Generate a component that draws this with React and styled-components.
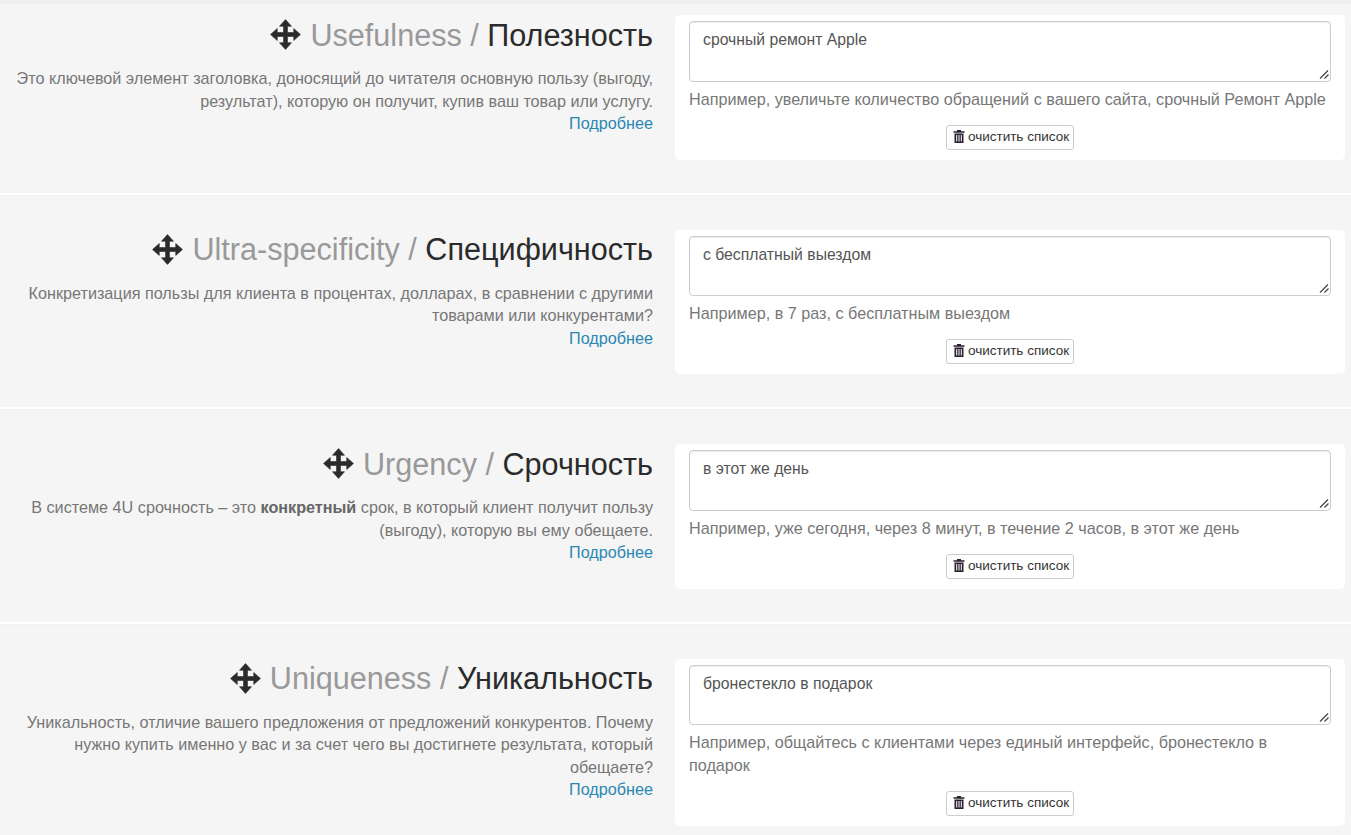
import React from "react";
import styled, { createGlobalStyle } from "styled-components";

const GlobalStyle = createGlobalStyle`
  html, body {
    margin: 0;
    padding: 0;
    height: 835px;
    overflow: hidden;
    background: #f5f5f5;
    font-family: "Liberation Sans", Arial, sans-serif;
  }
`;

const Strip = styled.div`
  height: 4px;
  background: #f0f0f0;
`;

const Row = styled.section`
  display: grid;
  grid-template-columns: 653px 670px;
  column-gap: 22px;
  padding: ${props => (props.$first ? "11px" : "35px")} 6px 33px 0;
  border-bottom: ${props => (props.$last ? "none" : "2px solid #fff")};
  box-shadow: ${props => (props.$last ? "none" : "0 1px 0 #f1f1f1")};
`;

const Info = styled.div`
  text-align: right;
`;

const Heading = styled.h2`
  display: flex;
  justify-content: flex-end;
  align-items: center;
  gap: 8px;
  margin: 0;
  padding-top: 1px;
  height: 37px;
  font-size: 30.6px;
  font-weight: 400;
  line-height: 34px;
  color: #2b2b2b;
  white-space: pre;
`;

const English = styled.span`
  color: #999;
`;

const Description = styled.p`
  margin: 14px 0 0;
  font-size: 16.2px;
  line-height: 22.5px;
  color: #777;

  b {
    color: #666;
  }
`;

const More = styled.a`
  display: block;
  font-size: 16.2px;
  line-height: 22.5px;
  color: #2a87b3;
  text-decoration: none;
`;

const Card = styled.div`
  background: #fff;
  border-radius: 5px;
  padding: 6px 14px 10px;
`;

const FieldWrap = styled.div`
  position: relative;
  height: 60.5px;
`;

const Field = styled.textarea`
  display: block;
  box-sizing: border-box;
  width: 642px;
  height: 60.5px;
  margin: 0;
  padding: 8px 13px;
  border: 1px solid #ccc;
  border-radius: 4px;
  font-family: inherit;
  font-size: 15.75px;
  line-height: 20px;
  color: #555;
  background: #fff;
  outline: none;
  resize: none;
  box-shadow: inset 0 1px 1px rgba(0, 0, 0, 0.075);
`;

const Grip = styled.svg`
  position: absolute;
  right: 2px;
  bottom: 3px;
`;

const Hint = styled.p`
  margin: 6px 0 0;
  font-size: 16.2px;
  line-height: 22.5px;
  color: #777;
`;

const Actions = styled.div`
  display: flex;
  justify-content: center;
  margin-top: 14.5px;
`;

const ClearButton = styled.button`
  display: inline-flex;
  align-items: center;
  gap: 3px;
  box-sizing: border-box;
  height: 25px;
  padding: 0 4px 2px 6px;
  background: #fff;
  border: 1px solid #ccc;
  border-radius: 3px;
  font-family: inherit;
  font-size: 13.5px;
  color: #333;
`;

const MoveIcon = () => (
  <svg width="33" height="33" viewBox="0 0 32 32" fill="#2b2b2b" stroke="#2b2b2b" strokeWidth="0.6" strokeLinejoin="round" aria-hidden="true">
    <path d="M16 1.500l5.800 6.500h-3.900v6.100H24v-3.900l6.500 5.800-6.500 5.800v-3.900h-6.100V24h3.900L16 30.500 10.200 24h3.900v-6.100H8v3.900L1.500 16 8 10.200v3.900h6.100V8h-3.900z" />
  </svg>
);

const TrashIcon = () => (
  <svg width="12" height="13" viewBox="0 0 12 13" fill="#2a2030" aria-hidden="true">
    <path d="M4 0h4v1.200h3.500v1.600H.5V1.200H4zM1.500 3.500h9V13h-9zM3.200 5v6.500h1V5zM5.500 5v6.500h1V5zM7.800 5v6.500h1V5z" fillRule="evenodd" />
  </svg>
);

const items = [
  {
    en: "Usefulness",
    ru: "Полезность",
    text: <>Это ключевой элемент заголовка, доносящий до читателя основную пользу (выгоду, результат), которую он получит, купив ваш товар или услугу.</>,
    value: "срочный ремонт Apple",
    hint: "Например, увеличьте количество обращений с вашего сайта, срочный Ремонт Apple",
  },
  {
    en: "Ultra-specificity",
    ru: "Специфичность",
    text: <>Конкретизация пользы для клиента в процентах, долларах, в сравнении с другими<br />товарами или конкурентами?</>,
    value: "с бесплатный выездом",
    hint: "Например, в 7 раз, с бесплатным выездом",
  },
  {
    en: "Urgency",
    ru: "Срочность",
    text: <>В системе 4U срочность – это <b>конкретный</b> срок, в который клиент получит пользу<br />(выгоду), которую вы ему обещаете.</>,
    value: "в этот же день",
    hint: "Например, уже сегодня, через 8 минут, в течение 2 часов, в этот же день",
  },
  {
    en: "Uniqueness",
    ru: "Уникальность",
    text: <>Уникальность, отличие вашего предложения от предложений конкурентов. Почему<br />нужно купить именно у вас и за счет чего вы достигнете результата, который<br />обещаете?</>,
    value: "бронестекло в подарок",
    hint: <>Например, общайтесь с клиентами через единый интерфейс, бронестекло в<br />подарок</>,
  },
];

const App = () => (
  <>
    <GlobalStyle />
    <Strip />
    {items.map((item, i) => (
      <Row key={item.en} $first={i === 0} $last={i === items.length - 1}>
        <Info>
          <Heading>
            <MoveIcon />
            <span>
              <English>{item.en} / </English>
              {item.ru}
            </span>
          </Heading>
          <Description>{item.text}</Description>
          <More href="#">Подробнее</More>
        </Info>
        <Card>
          <FieldWrap>
            <Field defaultValue={item.value} />
            <Grip width="10" height="10" viewBox="0 0 10 10" stroke="#444" strokeWidth="1.200" aria-hidden="true">
              <path d="M1 9.500L9 1.500M5.500 9.500L9.500 5.500" />
            </Grip>
          </FieldWrap>
          <Hint>{item.hint}</Hint>
          <Actions>
            <ClearButton type="button">
              <TrashIcon />
              очистить список
            </ClearButton>
          </Actions>
        </Card>
      </Row>
    ))}
  </>
);

export default App;
